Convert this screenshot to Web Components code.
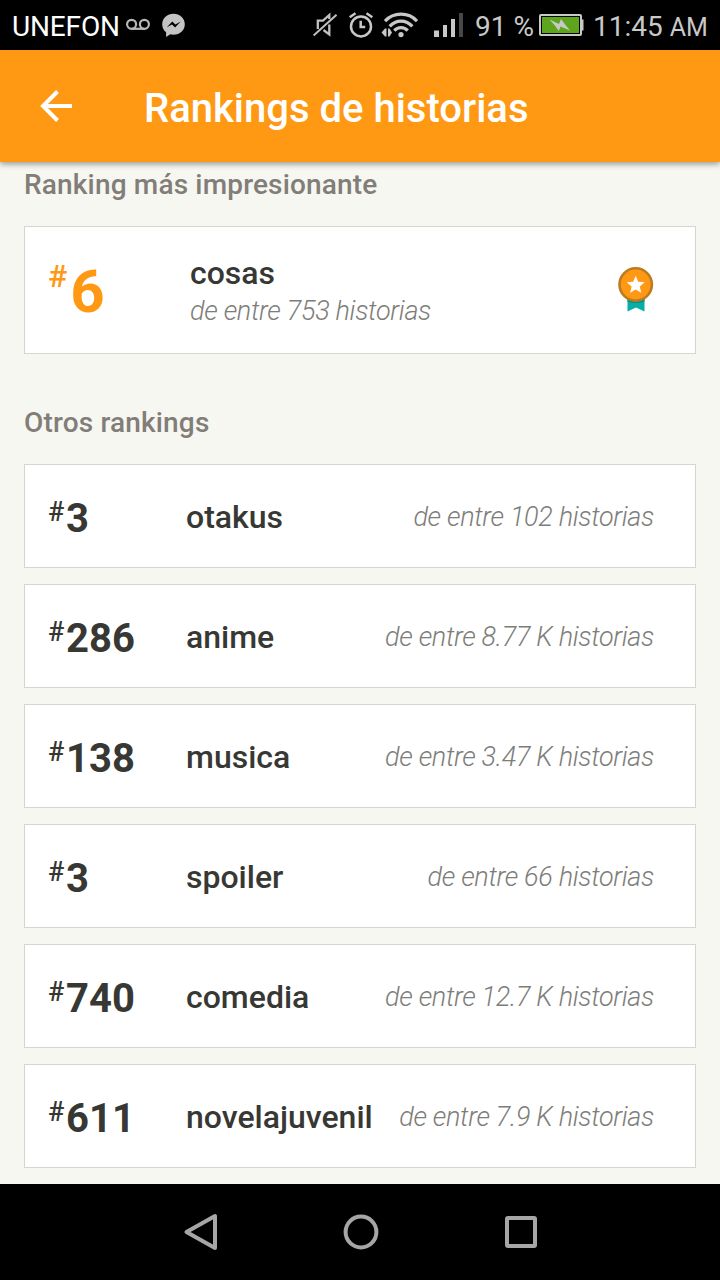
<!DOCTYPE html>
<html lang="es">
<head>
  <meta charset="utf-8">
  <title>Rankings de historias</title>
  <style>
    body {
      background: #f6f7f1;
      font-family: Roboto, "Liberation Sans", sans-serif;
      margin: 0;
    }
  </style>
</head>
<body>
  <rankings-page></rankings-page>

  <script>
    class StatusBar extends HTMLElement {
      constructor () {
        super()
        this.shadow = this.attachShadow({ mode: 'open' })
      }

      connectedCallback () {
        this.render()
      }

      render () {
        this.shadow.innerHTML =
          /* html */`
            <style>
              :host {
                align-items: center;
                background-color: #000;
                box-sizing: border-box;
                color: #c8c8c8;
                display: flex;
                font-size: 28px;
                height: 50px;
                justify-content: space-between;
                line-height: 48px;
                padding: 0 12px;
                white-space: nowrap;
              }

              svg {
                display: block;
                flex: none;
              }

              span { padding-top: 4px; }

              .group {
                align-items: center;
                display: flex;
              }

              .carrier {
                color: #fff;
                letter-spacing: -0.15px;
                width: 114px;
              }

              .messenger { margin-left: 12px; }
              .alarm { margin-left: 12px; }
              .wifi { margin-left: 8px; }
              .signal { margin-left: 16px; }

              .percent {
                margin-left: 12px;
                width: 64px;
              }

              .time {
                margin-left: 9px;
                width: 115px;
              }

              small { font-size: 25px; }
            </style>
            <div class="group">
              <span class="carrier">UNEFON</span>
              <svg width="24" height="26" viewBox="0 0 24 26" fill="none" stroke="#b8b8b8" stroke-width="2.2">
                <circle cx="5.6" cy="12.3" r="4.5"/>
                <circle cx="18.4" cy="12.3" r="4.5"/>
                <path d="M5.600 16.800H18.400"/>
              </svg>
              <svg class="messenger" width="23" height="26" viewBox="0 0 23 26">
                <path fill="#c4c4c4" d="M11.500 1.800C5.200 1.800.2 6.300.2 12.300c0 3.300 1.500 6.100 3.900 8V25l4.200-2.700c1 .3 2.100.4 3.200.4 6.300 0 11.300-4.500 11.300-10.500S17.800 1.800 11.500 1.800z"/>
                <path fill="#000" d="M4.800 15.300l5.500-5.700 3.100 3 5.300-3-5.600 5.900-3.100-3z"/>
              </svg>
            </div>
            <div class="group">
              <svg width="24" height="26" viewBox="0 0 24 26" fill="none" stroke="#c0c0c0">
                <path stroke-width="2.300" d="M4.800 17V8.700H10L16.300 3v4M16.300 12.500v10L10.500 18"/>
                <path stroke-width="1.900" d="M.6 23.500L23.500 2.800"/>
              </svg>
              <svg class="alarm" width="24" height="26" viewBox="0 0 24 26" fill="none" stroke="#c8c8c8" stroke-width="2.500">
                <circle cx="12" cy="14.400" r="10"/>
                <path d="M11.700 8.800V15H16.200M.7 5.200L6.500 1.300M23.300 5.200L17.500 1.300"/>
              </svg>
              <svg class="wifi" width="37" height="26" viewBox="0 0 37 26" fill="none" stroke="#c8c8c8" stroke-width="3.200">
                <path d="M4 9.200C12.500-.1 27.500-.1 36 9.200M8.700 14.400C15 7.300 25 7.300 31.300 14.400M13.300 18.700C17 14.700 23 14.700 26.700 18.700"/>
                <circle cx="20" cy="22.600" r="2.600" fill="#c8c8c8" stroke="none"/>
                <path fill="#c8c8c8" stroke="none" d="M.5 20.500L4 16.500h1.500v8H4zM11 20.500L8.500 16.500H7v8h1.500z"/>
              </svg>
              <svg class="signal" width="29" height="26" viewBox="0 0 29 26" fill="#c8c8c8">
                <path d="M0 18.500h5V25H0zM9 13h4v12H9zM17 7h4v18h-4z"/>
                <path fill="#484848" d="M25 1h4v24h-4z"/>
              </svg>
              <span class="percent">91 %</span>
              <svg width="45" height="26" viewBox="0 0 45 26">
                <rect y="2" width="43" height="22" rx="2" fill="#c8c8c8"/>
                <path fill="#c8c8c8" d="M42 7.500h2.500v11H42z"/>
                <rect x="2" y="4" width="39" height="18" fill="#000"/>
                <rect x="3" y="5" width="37" height="16" fill="#5da51d"/>
                <path fill="#c8c8c8" d="M10.500 7.500L20 12l2-5 4.500 6 4.500 5.500-9.500-4-1.700 4.500-4.300-6z"/>
              </svg>
              <span class="time">11:45 <small>AM</small></span>
            </div>
          `
      }
    }

    class AppHeader extends HTMLElement {
      constructor () {
        super()
        this.shadow = this.attachShadow({ mode: 'open' })
      }

      connectedCallback () {
        this.render()
      }

      render () {
        this.shadow.innerHTML =
          /* html */`
            <style>
              :host {
                align-items: center;
                background-color: #ff9914;
                box-shadow: 0 2px 6px rgba(0, 0, 0, 0.4);
                box-sizing: border-box;
                display: flex;
                height: 112px;
                padding: 0 40px;
              }

              button {
                background: none;
                border: none;
                flex: none;
                height: 32px;
                padding: 0;
                width: 32px;
              }

              svg { display: block; }

              h1 {
                color: #fff;
                font-size: 40px;
                font-weight: 500;
                line-height: 48px;
                margin: 6px 0 0 72px;
                white-space: nowrap;
              }
            </style>
            <button aria-label="Volver">
              <svg width="32" height="32" viewBox="0 0 32 32" fill="none" stroke="#fff" stroke-width="4">
                <path d="M32 16H4M17.500 1.500L3 16L17.500 30.500"/>
              </svg>
            </button>
            <h1><slot></slot></h1>
          `
      }
    }

    class SectionTitle extends HTMLElement {
      constructor () {
        super()
        this.shadow = this.attachShadow({ mode: 'open' })
      }

      connectedCallback () {
        this.render()
      }

      render () {
        this.shadow.innerHTML =
          /* html */`
            <style>
              :host { display: block; }

              h2 {
                color: #827d78;
                font-size: 28px;
                font-weight: 500;
                letter-spacing: 0.17px;
                line-height: 32px;
                margin: 0;
              }
            </style>
            <h2><slot></slot></h2>
          `
      }
    }

    class BestRanking extends HTMLElement {
      constructor () {
        super()
        this.shadow = this.attachShadow({ mode: 'open' })
      }

      connectedCallback () {
        this.render()
      }

      render () {
        this.shadow.innerHTML =
          /* html */`
            <style>
              :host {
                align-items: center;
                background-color: #fff;
                border: 1px solid #d5d6d1;
                box-sizing: border-box;
                display: flex;
                height: 128px;
                padding: 0 41px 0 23px;
              }

              .position {
                color: #ff9914;
                display: flex;
                flex: none;
                gap: 3px;
                padding-top: 4px;
                width: 142px;
              }

              .hash {
                font-size: 32px;
                font-weight: 500;
                line-height: 38px;
              }

              .number {
                font-size: 60px;
                font-weight: 700;
                line-height: 70px;
              }

              .detail {
                flex: 1;
                padding-top: 5px;
              }

              .tag {
                color: #373834;
                font-size: 32px;
                font-weight: 500;
                line-height: 38px;
              }

              .total {
                color: #7d7d79;
                font-size: 27px;
                font-style: italic;
                font-weight: 300;
                letter-spacing: -0.32px;
                line-height: 39px;
              }

              svg { flex: none; }
            </style>
            <div class="position">
              <span class="hash">#</span>
              <span class="number">${this.getAttribute('position')}</span>
            </div>
            <div class="detail">
              <div class="tag">${this.getAttribute('tag')}</div>
              <div class="total"><slot></slot></div>
            </div>
            <svg width="36" height="46" viewBox="0 0 36 46">
              <path fill="#08ada5" d="M9.500 30h17v14.500L18 40.500l-8.500 4z"/>
              <path fill="#078e87" d="M9.500 32h17v2.500q-8.500 3-17 0z"/>
              <circle cx="17.700" cy="17.500" r="16.200" fill="#ff9914" stroke="#bb7b20" stroke-width="2.600"/>
              <path fill="#fff" d="M17.700 8.800l2.500 5.900 6.400.6-4.800 4.200 1.400 6.300-5.500-3.300-5.500 3.300 1.400-6.300-4.800-4.200 6.400-.6z"/>
            </svg>
          `
      }
    }

    class RankingRow extends HTMLElement {
      constructor () {
        super()
        this.shadow = this.attachShadow({ mode: 'open' })
      }

      connectedCallback () {
        this.render()
      }

      render () {
        this.shadow.innerHTML =
          /* html */`
            <style>
              :host {
                align-items: center;
                background-color: #fff;
                border: 1px solid #d5d6d1;
                box-sizing: border-box;
                color: #373834;
                display: flex;
                height: 104px;
                padding: 2px 41px 0 23px;
                white-space: nowrap;
              }

              .position {
                display: flex;
                flex: none;
                padding-top: 3px;
                width: 138px;
              }

              .hash {
                font-size: 27px;
                font-weight: 500;
                line-height: 34px;
                width: 18px;
              }

              .number {
                font-size: 40px;
                font-weight: 700;
                line-height: 48px;
              }

              .tag {
                flex: 1;
                font-size: 32px;
                font-weight: 500;
              }

              .total {
                color: #7d7d79;
                font-size: 27px;
                font-style: italic;
                font-weight: 300;
                letter-spacing: -0.34px;
              }
            </style>
            <div class="position">
              <span class="hash">#</span>
              <span class="number">${this.getAttribute('position')}</span>
            </div>
            <div class="tag">${this.getAttribute('tag')}</div>
            <div class="total"><slot></slot></div>
          `
      }
    }

    class NavigationBar extends HTMLElement {
      constructor () {
        super()
        this.shadow = this.attachShadow({ mode: 'open' })
      }

      connectedCallback () {
        this.render()
      }

      render () {
        this.shadow.innerHTML =
          /* html */`
            <style>
              :host {
                align-items: center;
                background-color: #000;
                box-sizing: border-box;
                display: flex;
                height: 96px;
                justify-content: space-between;
                padding: 0 180px 0 182px;
              }

              svg {
                fill: none;
                stroke: #a6a6a6;
                stroke-width: 4;
              }
            </style>
            <svg width="38" height="40" viewBox="0 0 38 40">
              <path stroke-linejoin="round" d="M33 4v32L4.500 20z"/>
            </svg>
            <svg width="38" height="40" viewBox="0 0 38 40">
              <circle cx="19" cy="20" r="15.400"/>
            </svg>
            <svg width="38" height="40" viewBox="0 0 38 40">
              <rect x="5" y="6" width="28" height="28" rx="1" stroke-linejoin="round"/>
            </svg>
          `
      }
    }

    class RankingsPage extends HTMLElement {
      constructor () {
        super()
        this.shadow = this.attachShadow({ mode: 'open' })
        this.best = { position: 6, tag: 'cosas', total: '753' }
        this.rankings = [
          { position: 3, tag: 'otakus', total: '102' },
          { position: 286, tag: 'anime', total: '8.77 K' },
          { position: 138, tag: 'musica', total: '3.47 K' },
          { position: 3, tag: 'spoiler', total: '66' },
          { position: 740, tag: 'comedia', total: '12.7 K' },
          { position: 611, tag: 'novelajuvenil', total: '7.9 K' }
        ]
      }

      connectedCallback () {
        this.render()
      }

      render () {
        this.shadow.innerHTML =
          /* html */`
            <style>
              :host {
                display: flex;
                flex-direction: column;
                height: 1280px;
                overflow: hidden;
                width: 720px;
              }

              main {
                display: flex;
                flex: 1;
                flex-direction: column;
                gap: 53px;
                padding: 7px 24px 0;
              }

              section {
                display: flex;
                flex-direction: column;
                gap: 25px;
              }

              .list {
                display: flex;
                flex-direction: column;
                gap: 16px;
              }
            </style>
            <status-bar></status-bar>
            <app-header>Rankings de historias</app-header>
            <main>
              <section>
                <section-title>Ranking más impresionante</section-title>
                <best-ranking position="${this.best.position}" tag="${this.best.tag}">de entre ${this.best.total} historias</best-ranking>
              </section>
              <section>
                <section-title>Otros rankings</section-title>
                <div class="list">
                  ${this.rankings.map(ranking => `<ranking-row position="${ranking.position}" tag="${ranking.tag}">de entre ${ranking.total} historias</ranking-row>`).join('')}
                </div>
              </section>
            </main>
            <navigation-bar></navigation-bar>
          `
      }
    }

    customElements.define('status-bar', StatusBar)
    customElements.define('app-header', AppHeader)
    customElements.define('section-title', SectionTitle)
    customElements.define('best-ranking', BestRanking)
    customElements.define('ranking-row', RankingRow)
    customElements.define('navigation-bar', NavigationBar)
    customElements.define('rankings-page', RankingsPage)
  </script>
</body>
</html>
